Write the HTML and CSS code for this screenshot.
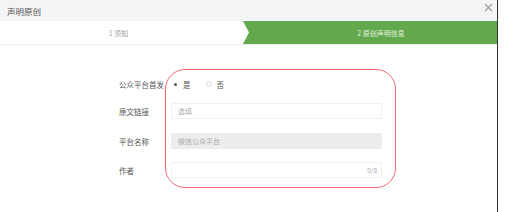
FILE: index.html
```html
<!DOCTYPE html>
<html lang="zh-CN">
<head>
  <meta charset="UTF-8">
  <meta name="viewport" content="width=device-width, initial-scale=1.0">
  <title>声明原创</title>
  <link rel="stylesheet" href="styles.css">
</head>
<body>
  <div class="dialog">
    <div class="header">
      <span class="title">声明原创</span>
      <svg class="close" width="9" height="9" viewBox="0 0 9 9">
        <path d="M1 1L8 8M8 1L1 8" stroke="#a0a0a0" stroke-width="1.2" fill="none"/>
      </svg>
    </div>
    <div class="steps">
      <div class="step step-done">1 须知</div>
      <div class="step step-current">2 原创声明信息</div>
    </div>
    <div class="form">
      <div class="row row-radio">
        <label class="label">公众平台首发</label>
        <div class="radios">
          <span class="radio checked"></span><span class="radio-text">是</span>
          <span class="radio"></span><span class="radio-text">否</span>
        </div>
      </div>
      <div class="row">
        <label class="label">原文链接</label>
        <div class="input"><span class="placeholder">选填</span></div>
      </div>
      <div class="row">
        <label class="label">平台名称</label>
        <div class="input input-disabled"><span class="placeholder">微信公众平台</span></div>
      </div>
      <div class="row row-last">
        <label class="label">作者</label>
        <div class="input input-count"><span class="counter">0/8</span></div>
      </div>
      <div class="highlight"></div>
    </div>
  </div>
</body>
</html>
```

FILE: styles.css
```css
body {
  margin: 0;
  background: #fff;
  font-family: "Noto Sans CJK SC", "Noto Sans", sans-serif;
  color: #333;
}
.dialog {
  width: 497px;
  height: 212px;
  border-right: 1px solid #333;
  background: #fff;
}
.header {
  height: 21px;
  display: flex;
  align-items: center;
  justify-content: space-between;
  padding: 0 4px 0 7px;
  background: #f3f4f6;
}
.title {
  font-size: 8.5px;
  color: #555;
}
.close {
  margin-top: -6px;
}
.steps {
  display: flex;
  height: 23px;
  background: #62a84c;
  border-bottom: 1px solid #eef0ee;
}
.step {
  display: flex;
  align-items: center;
  justify-content: center;
  font-size: 7px;
}
.step-done {
  flex: 0 0 249px;
  padding-right: 12px;
  box-sizing: border-box;
  background: #fff;
  color: #a0a0a0;
  clip-path: polygon(0 0, 243px 0, 249px 50%, 243px 100%, 0 100%);
}
.step-current {
  flex: 1;
  padding-left: 16px;
  color: #e3f0dd;
}
.form {
  position: relative;
  padding-top: 31px;
  display: flex;
  flex-direction: column;
  gap: 14px;
}
.row {
  display: flex;
  align-items: center;
  height: 16px;
}
.row-radio {
  margin-bottom: -3px;
}
.row-last {
  margin-top: -1px;
}
.label {
  width: 52px;
  margin-left: 119px;
  font-size: 7.5px;
  color: #555;
}
.radios {
  display: flex;
  align-items: center;
}
.radio {
  width: 6px;
  height: 6px;
  border: 1px solid #ddd;
  border-radius: 50%;
  box-sizing: border-box;
  margin-left: 1px;
  position: relative;
}
.radio.checked {
  border-color: #fff;
}
.radio.checked::after {
  content: "";
  position: absolute;
  left: 0.5px;
  top: 0.5px;
  width: 3px;
  height: 3px;
  border-radius: 50%;
  background: #555;
}
.radio-text {
  font-size: 7.5px;
  margin-left: 5px;
  margin-right: 14px;
  color: #555;
}
.input {
  width: 211px;
  height: 16px;
  box-sizing: border-box;
  border: 1px solid #f0f0f0;
  background: #fff;
  display: flex;
  align-items: center;
  padding: 0 6px;
}
.input-disabled {
  background: #ededed;
  border-color: #ededed;
}
.input-count {
  justify-content: flex-end;
  padding-right: 4px;
}
.placeholder {
  font-size: 7px;
  color: #aaa;
}
.counter {
  font-size: 6.5px;
  color: #aaa;
}
.highlight {
  position: absolute;
  left: 165px;
  top: 24px;
  width: 231px;
  height: 119px;
  box-sizing: border-box;
  border: 1.5px solid #f36b70;
  border-radius: 20px;
}
```
